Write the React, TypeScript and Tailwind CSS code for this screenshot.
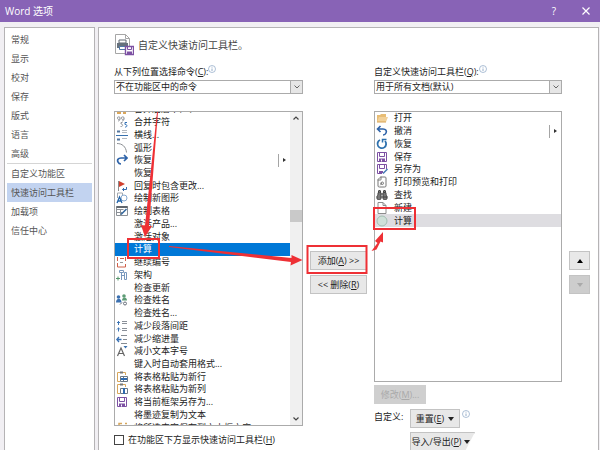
import type { ReactNode } from 'react'
import { Binoculars, FileSearch } from 'lucide-react'

const font = "font-['Open_Sans','Noto_Sans_CJK_SC',sans-serif]"

function Icon ({ children }: { children: ReactNode }) {
  return (
    <svg
      viewBox="0 0 12 12"
      className="size-3"
      fill="none"
      strokeWidth="1"
      aria-hidden="true"
    >
      {children}
    </svg>
  )
}

const save = (
  <Icon>
    <path d="M1.5 1.5h9v9h-9z" stroke="#7d51a3" />
    <path d="M3.5 1.5v4h5v-4" stroke="#7d51a3" />
    <path d="M3 7.5h6v3H3z" fill="#7d51a3" />
    <path d="M5 8.5h1v2H5z" fill="#fff" />
  </Icon>
)

const spacing = (
  <Icon>
    <path d="M2.500 1v4M2.500 7.500v4M1 3l1.500-1.500L4 3M1 9.500l1.500-1.500L4 9.500" stroke="#3f76b5" />
    <path d="M6 1.500h5M6 3.500h5M6 8.500h5M6 10.500h5" stroke="#8a9099" />
  </Icon>
)

const redo = (
  <Icon>
    <path d="M8 1l3 3-3 3M10.500 4H5C2 4 1 6 2 8c.5 1.200 1.500 2 3 2" stroke="#2d62a8" strokeWidth="1.700" />
  </Icon>
)

const commands: { label: string, icon?: ReactNode, menu?: boolean }[] = [
  {
    label: '合并后居中(M)',
    icon: <Icon><path d="M1 8h4v3H1zM7 9h3v2H7z" fill="#dba75a" /></Icon>
  },
  {
    label: '合并字符',
    icon: (
      <Icon>
        <path d="M4 2.500a1.300 1.300 0 1 0-2.500 0 1.300 1.300 0 0 0 2.500 0c0 1.500-.5 2.500-2 2.500M8 2.500a1.300 1.300 0 1 0-2.500 0 1.300 1.300 0 0 0 2.500 0c0 1.500-.5 2.500-2 2.500M6.500 6.500H5v1.500c2.500 0 2 3-.5 2.500" stroke="#7b8088" strokeWidth="0.800" />
        <path d="M11 6.500H9v2c2.500-.5 2.500 3 0 2.500" stroke="#2f6fb5" />
      </Icon>
    )
  },
  {
    label: '横线...',
    icon: (
      <Icon>
        <path d="M0 6.500h12" stroke="#3971ae" />
        <path d="M1 2.500h3M1 10.500h3" stroke="#53759c" strokeWidth="2" />
        <path d="M6 1.500h5M6 3.500h5M6 9.500h5" stroke="#b5bac0" />
      </Icon>
    )
  },
  {
    label: '弧形',
    icon: <Icon><path d="M1 1.500c5 0 9 3 9.500 9" stroke="#8b8f94" /></Icon>
  },
  { label: '恢复', icon: redo, menu: true },
  { label: '恢复' },
  {
    label: '回复时包含更改...',
    icon: (
      <Icon>
        <path d="M2.500 1v10" stroke="#8b8b8b" />
        <path d="M3 1l6 3-6 3z" fill="#d1402f" />
        <path d="M10.500 7v2.500H6.500M8 8L6.500 9.500 8 11" stroke="#346bae" />
      </Icon>
    )
  },
  {
    label: '绘制新图形',
    icon: (
      <Icon>
        <path d="M1.500 6V1h5v2" stroke="#a4a9af" />
        <circle cx="8" cy="6" r="3" stroke="#86a9d0" />
        <path d="M1 11l2.500-6L6 11M2 9h3" stroke="#2465a9" strokeWidth="1.300" />
      </Icon>
    )
  },
  {
    label: '绘制表格',
    icon: (
      <Icon>
        <path d="M.5 1.500h11v9H.5zM.5 4.500h7M4.500 4.500v6M.5 7.500h6" stroke="#8b9096" />
        <path d="M.5 2h11" stroke="#5f666d" strokeWidth="2" />
        <path d="M10.500 4L5 9.500" stroke="#35699f" strokeWidth="1.600" />
      </Icon>
    )
  },
  { label: '激活产品...' },
  { label: '激活对象' },
  { label: '计算' },
  {
    label: '继续编号',
    icon: (
      <Icon>
        <path d="M1.500 1v4M4 2.500h4M9.500 1v4M1.500 7v4h8V8" stroke="#d06049" />
        <path d="M4 6.500h3" stroke="#999" />
      </Icon>
    )
  },
  {
    label: '架构',
    icon: (
      <Icon>
        <path d="M3.500 1.500h4v2h-4zM5.500 4v7M8.500 3.500h2v7h-2zM5.500 6.500h3" stroke="#7797bd" />
        <path d="M0 9.500h4M2 7.500v4" stroke="#57966d" />
      </Icon>
    )
  },
  { label: '检查更新' },
  {
    label: '检查姓名',
    icon: (
      <Icon>
        <circle cx="2.500" cy="3" r="1.800" fill="#3b70b0" />
        <path d="M0 8.500c0-5 5.500-5 5.500 0z" fill="#3b70b0" />
        <circle cx="8" cy="2" r="1.800" fill="#5e9c76" />
        <path d="M6 6.500c0-4 5-4 5 0z" fill="#5e9c76" />
        <circle cx="9" cy="9.500" r="1.500" stroke="#666e7a" />
        <path d="M4 10.500l2-2" stroke="#666e7a" />
      </Icon>
    )
  },
  { label: '检查姓名...' },
  { label: '减少段落间距', icon: spacing },
  {
    label: '减少缩进量',
    icon: (
      <Icon>
        <path d="M0.500 6.500h5M3 4L.8 6.500 3 9" stroke="#3971b4" strokeWidth="1.300" />
        <path d="M5 2.500h6M7 6.500h4M5 10.500h6" stroke="#858b92" />
      </Icon>
    )
  },
  {
    label: '减小文本字号',
    icon: (
      <Icon>
        <path d="M1.500 11L5 3l3.500 8M2.800 8.500h4.400" stroke="#656565" strokeWidth="1.200" />
        <path d="M7.500 1h4L9.500 3.500z" fill="#3a70ad" />
      </Icon>
    )
  },
  { label: '键入时自动套用格式...' },
  {
    label: '将表格粘贴为新行',
    icon: (
      <Icon>
        <path d="M4 10.500H1.500v-9h8V4" stroke="#d8a75b" />
        <path d="M4 .5h3v2H4z" fill="#777" />
        <path d="M4.500 5.500h7v5h-7zM7.500 5.500v5" stroke="#6b7885" />
        <path d="M5 8h6" stroke="#2e6aaf" strokeWidth="2" />
      </Icon>
    )
  },
  {
    label: '将表格粘贴为新列',
    icon: (
      <Icon>
        <path d="M4 10.500H1.500v-9h8V4" stroke="#d8a75b" />
        <path d="M4 .5h3v2H4z" fill="#777" />
        <path d="M4.500 5.500h7v5h-7z" stroke="#6b7885" />
        <path d="M8 5v6" stroke="#2e6aaf" strokeWidth="2" />
      </Icon>
    )
  },
  { label: '将当前框架另存为...', icon: save },
  { label: '将墨迹复制为文本' },
  {
    label: '将所选内容保存到文本框文库',
    icon: <Icon><path d="M3 11V1.500h3M9 1.500h2" stroke="#d8a75b" strokeWidth="1.500" /></Icon>
  }
]

const toolbar: { label: string, icon: ReactNode, menu?: boolean }[] = [
  {
    label: '打开',
    icon: (
      <Icon>
        <path d="M1 10V3h3l1-1h5v3" fill="#e8bd74" />
        <path d="M1 10l2-5h9l-2 5z" fill="#f2d199" />
        <path d="M1 10h9" stroke="#d7a253" />
      </Icon>
    )
  },
  {
    label: '撤消',
    menu: true,
    icon: (
      <Icon>
        <path d="M4.500 1l-3 3 3 3M2 4h5c3 0 4 2 3 4-.5 1.200-1.500 2-3 2" stroke="#2d62a8" strokeWidth="1.600" />
      </Icon>
    )
  },
  {
    label: '恢复',
    icon: (
      <Icon>
        <path d="M4 2a4.300 4.300 0 1 0 5 1" stroke="#2d70ad" strokeWidth="1.800" />
        <path d="M6.500 4.500V1.500h4" stroke="#2d70ad" strokeWidth="1.500" />
      </Icon>
    )
  },
  { label: '保存', icon: save },
  {
    label: '另存为',
    icon: (
      <Icon>
        <path d="M6 10.500H1.500v-9h9V6M3.500 1.500v4h5v-4" stroke="#7d51a3" />
        <path d="M3 8h4v2H3z" fill="#7d51a3" />
        <path d="M11.500 6L7 10.500" stroke="#4478b3" strokeWidth="1.500" />
      </Icon>
    )
  },
  {
    label: '打印预览和打印',
    icon: <FileSearch className="size-3 -scale-x-100 text-[#777]" strokeWidth={2} />
  },
  {
    label: '查找',
    icon: <Binoculars className="size-3 text-[#444]" fill="#777" strokeWidth={2} />
  },
  {
    label: '新建',
    icon: <Icon><path d="M2 .5h5l3 3v8H2zM7 .5v3h3" stroke="#8c8c8c" /></Icon>
  },
  {
    label: '计算',
    icon: <Icon><circle cx="6" cy="6" r="5" fill="#cfe0d8" stroke="#a3bfb2" /></Icon>
  }
]

const categories = [
  ['常规', '显示', '校对', '保存', '版式', '语言', '高级'],
  ['自定义功能区', '快速访问工具栏', '加载项', '信任中心']
]

function Info () {
  return (
    <svg viewBox="0 0 8 8" className="mt-px size-2" fill="none" stroke="#8ba5c4" aria-hidden="true">
      <circle cx="4" cy="4" r="3.500" strokeWidth="0.700" />
      <path d="M4 3.500v2.500M4 1.800v.8" strokeWidth="0.900" />
    </svg>
  )
}

function Submenu () {
  return (
    <span className="ml-auto flex h-full w-3 items-center border-l border-[#a5a5a5] pl-1">
      <svg viewBox="0 0 3 4" className="h-1 w-[3px]" fill="#333" aria-hidden="true">
        <path d="M0 0l3 2-3 2z" />
      </svg>
    </span>
  )
}

function Picker ({ id, label, hotkey, value }: { id: string, label: string, hotkey: string, value: string }) {
  return (
    <div>
      <div className="flex h-4 items-start">
        <label htmlFor={id} className="whitespace-nowrap leading-4">
          {label}(<u>{hotkey}</u>):
        </label>
        <Info />
      </div>
      <div className="relative">
        <select
          id={id}
          className="block h-[14px] w-full appearance-none border border-[#ababab] bg-white pl-px text-[9px] leading-3"
        >
          <option>{value}</option>
        </select>
        <span className="pointer-events-none absolute inset-y-0 right-0 flex w-[13px] items-center justify-center border border-[#ababab] bg-[#e6e6e6]">
          <svg viewBox="0 0 6 4" className="h-1 w-1.5" fill="none" stroke="#666" aria-hidden="true">
            <path d="M.5.5L3 3 5.500.5" />
          </svg>
        </span>
      </div>
    </div>
  )
}

const button = 'flex h-[19px] items-center justify-center whitespace-nowrap border border-[#c3c3c3]'

function Triangle ({ up = false }: { up?: boolean }) {
  return (
    <svg viewBox="0 0 6 4" className="h-1 w-1.5" fill="currentColor" aria-hidden="true">
      <path d={up ? 'M3 0l3 4H0z' : 'M0 0h6L3 4z'} />
    </svg>
  )
}

export default function App () {
  return (
    <div className={`relative flex h-screen flex-col overflow-hidden bg-[#f1eff3] text-[9px] text-[#222] ${font}`}>
      <header className="flex h-[22px] shrink-0 items-center bg-[#8863b6] pl-[5px] pr-2 text-white">
        <h1 className="text-[10px]">Word 选项</h1>
        <button className="ml-auto w-3 text-[10px]" aria-label="帮助">?</button>
        <button className="ml-5 flex w-3 justify-center" aria-label="关闭">
          <svg viewBox="0 0 8 8" className="size-2" stroke="currentColor" strokeWidth="1.200" aria-hidden="true">
            <path d="M.5.5l7 7M7.500.5l-7 7" />
          </svg>
        </button>
      </header>

      <div className="flex min-h-0 flex-1 gap-[3px] pl-1 pr-px pt-[5px]">
        <nav className="w-[91px] shrink-0 border border-b-0 border-[#b5b3b5] bg-white pt-0.5 text-[#555]">
          {categories.map((group, index) => (
            <ul
              key={index}
              className={index > 0 ? 'mx-0.5 border-t border-[#d5d5d5]' : 'mx-0.5'}
            >
              {group.map((name) => (
                <li key={name}>
                  <a
                    href="#"
                    className={`flex h-[19px] items-center pl-1 ${name === '快速访问工具栏' ? 'bg-[#c2d3f0]' : ''}`}
                  >
                    {name}
                  </a>
                </li>
              ))}
            </ul>
          ))}
        </nav>

        <main className="min-w-0 flex-1 overflow-hidden border border-b-0 border-[#b5b3b5] bg-white pl-[15px] pr-2 pt-1.5">
          <div className="flex h-[22px] items-center gap-1">
            <svg viewBox="0 0 20 22" className="h-[22px] w-5" fill="none" aria-hidden="true">
              <path d="M1.500.5h10l4 4v15h-14zM11.500.5v4h4" stroke="#a6a6a6" />
              <path d="M5 6h7v3H5z" fill="#fff" stroke="#606972" />
              <path d="M3 9h11v5H3z" fill="#66717c" />
              <path d="M5.500 12.500h6v3h-6z" fill="#fff" stroke="#4f78a8" />
              <path d="M11.500 12.500h8v8h-8z" fill="#fff" stroke="#7d51a3" strokeWidth="1.400" />
              <path d="M13.500 12.500v3h4v-3" stroke="#7d51a3" />
              <path d="M13 17.500h5v3h-5z" fill="#7d51a3" />
            </svg>
            <h2 className="text-[10px] text-[#444]">自定义快速访问工具栏。</h2>
          </div>

          <div className="flex pt-2">
            <section className="w-[189px] shrink-0">
              <Picker id="source" label="从下列位置选择命令" hotkey="C" value="不在功能区中的命令" />
              <div className="mt-[17px] flex h-[315px] overflow-hidden border border-[#ababab]">
                <ul className="-mt-[9px] grid h-[331px] min-w-0 flex-1 auto-rows-fr">
                  {commands.map(({ label, icon, menu }, index) => (
                    <li
                      key={index}
                      className={`flex min-h-0 items-center ${label === '计算' ? 'bg-[#0078d7] text-white' : ''}`}
                    >
                      <span className="w-[19px] shrink-0 pl-px">{icon}</span>
                      <span className="whitespace-nowrap leading-3">{label}</span>
                      {menu && <Submenu />}
                    </li>
                  ))}
                </ul>
                <div className="flex w-3 shrink-0 flex-col items-center bg-[#f0f0f0] py-1">
                  <svg viewBox="0 0 6 4" className="h-1 w-1.5" fill="none" stroke="#444" strokeWidth="1.200" aria-hidden="true">
                    <path d="M.5 3.500L3 1l2.500 2.500" />
                  </svg>
                  <div className="mt-[90px] h-3 w-full bg-[#c9c9c9]" />
                  <svg viewBox="0 0 6 4" className="mt-auto h-1 w-1.5" fill="none" stroke="#444" strokeWidth="1.200" aria-hidden="true">
                    <path d="M.5.5L3 3 5.500.5" />
                  </svg>
                </div>
              </div>
              <label className="mt-2 flex h-3 items-center gap-1 whitespace-nowrap">
                <input type="checkbox" className="size-2.5 appearance-none border border-[#444] bg-white" />
                <span>在功能区下方显示快速访问工具栏(<u>H</u>)</span>
              </label>
            </section>

            <div className="flex w-[71px] shrink-0 flex-col gap-[5px] px-[7px] pt-[187px]">
              <button className={`${button} bg-[#e8e8e8]`}>添加(<u>A</u>) &gt;&gt;</button>
              <button className={`${button} bg-[#e8e8e8]`}>&lt;&lt; 删除(<u>R</u>)</button>
            </div>

            <section className="w-[188px] shrink-0">
              <Picker id="target" label="自定义快速访问工具栏" hotkey="Q" value="用于所有文档(默认)" />
              <div className="mt-[17px] h-[271px] border border-[#ababab]">
                <ul className="grid h-[115px] auto-rows-fr">
                  {toolbar.map(({ label, icon, menu }) => (
                    <li
                      key={label}
                      className={`flex min-h-0 items-center ${label === '计算' ? 'bg-[#dedde1]' : ''}`}
                    >
                      <span className="w-[19px] shrink-0 pl-px">{icon}</span>
                      <span className="leading-3">{label}</span>
                      {menu && <Submenu />}
                    </li>
                  ))}
                </ul>
              </div>
              <button className="mt-[3px] flex h-[19px] w-[52px] items-center justify-center bg-[#cfcfcf] text-[#aaa]" disabled>
                修改(<u>M</u>)...
              </button>
              <div className="mt-[5px] grid grid-cols-[36px_1fr] gap-y-1">
                <span className="leading-4">自定义:</span>
                <div className="flex items-start gap-0.5">
                  <button className={`${button} w-[50px] gap-1 bg-[#e8e8e8]`}>
                    <span>重置(<u>E</u>)</span>
                    <Triangle />
                  </button>
                  <Info />
                </div>
                <button className={`${button} col-start-2 w-[65px] gap-0.5 bg-[#e8e8e8] pr-1 [clip-path:polygon(0_0,100%_0,85%_100%,0_100%)]`}>
                  <span>导入/导出(<u>P</u>)</span>
                  <Triangle />
                </button>
              </div>
            </section>

            <div className="ml-auto flex w-[21px] flex-col gap-[5px] pt-[187px]">
              <button className={`${button} bg-[#e8e8e8] text-black`} aria-label="上移"><Triangle up /></button>
              <button className={`${button} bg-[#cdcdcd] text-[#aaa]`} aria-label="下移" disabled><Triangle /></button>
            </div>
          </div>
        </main>
      </div>

      <svg
        viewBox="0 0 600 450"
        className="pointer-events-none absolute left-0 top-0 h-[450px] w-[600px]"
        fill="none"
        stroke="#ee3035"
        strokeWidth="2"
        aria-hidden="true"
      >
        <path d="M128 239h31v19h-31zM307.500 246h59v27h-59zM374 208h41v21h-41z" />
        <g fill="#ee3035" stroke="none">
          <path d="M157 112h1l-9 114h3l-7 11-4-12 4 .5z" />
          <path d="M169 246v1l122 15-.5 3.500 12-5.500-11-5v3z" />
          <path d="M371.500 251l6-8-2.500-2 8-9v10.500l-2.500-1-4 8z" />
        </g>
      </svg>
    </div>
  )
}
